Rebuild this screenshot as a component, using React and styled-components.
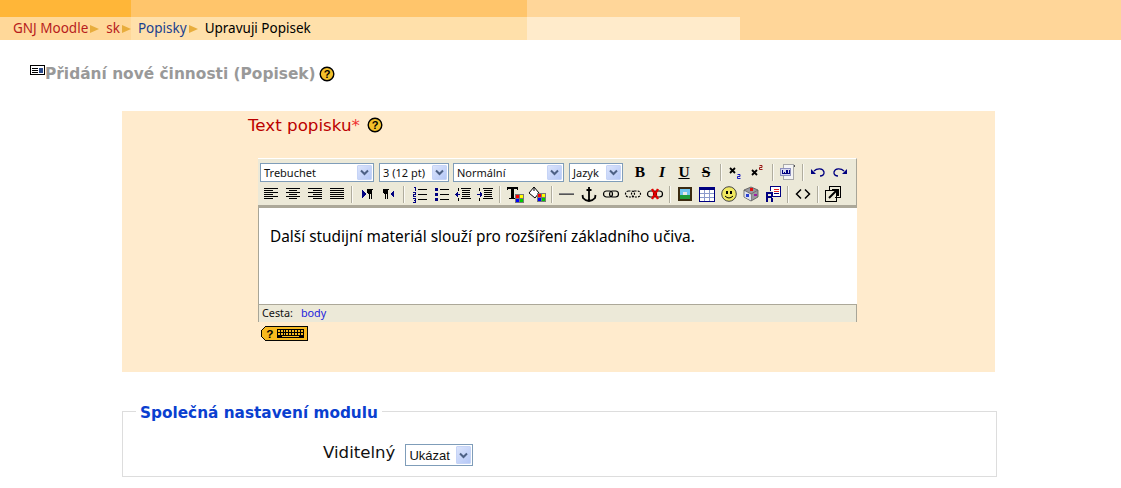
import React from "react";
import styled, { createGlobalStyle } from "styled-components";

const Global = createGlobalStyle`
  html, body { margin: 0; padding: 0; background: #fff; overflow: hidden; }
  body { font-family: "DejaVu Sans", Verdana, sans-serif; color: #000; }
`;

/* ---------- header ---------- */
const Header = styled.header`
  display: grid;
  grid-template-columns: 131px 396px 213px 1fr;
  grid-template-rows: 17px 23px;
  height: 40px;
  background: #ffd699;
`;
const Tab = styled.div`
  background: ${(p) => p.$c};
  display: flex;
  align-items: center;
  min-width: 0;
`;
const Crumbs = styled.nav`
  grid-column: 1 / 3;
  grid-row: 2;
  display: flex;
  align-items: center;
  padding-left: 13px;
  font: 13.5px/1 "Noto Sans", "DejaVu Sans", sans-serif;
  background: linear-gradient(to right, #ffd899 0, #ffd899 131px, #ffe0aa 131px);
`;
const Crumb = styled.a`
  color: ${(p) => p.$c};
  white-space: nowrap;
`;
const Sep = styled.span`
  display: inline-block;
  width: 0;
  height: 0;
  border-left: 9px solid #e8ad3c;
  border-top: 4.5px solid transparent;
  border-bottom: 4.5px solid transparent;
  margin: 0 7px 0 2px;
`;

/* ---------- heading ---------- */
const Heading = styled.h2`
  display: flex;
  align-items: center;
  height: 20px;
  margin: 24px 0 0 30px;
  font: bold 15.4px/20px "DejaVu Sans", Verdana, sans-serif;
  color: #999;
  white-space: nowrap;
`;
const HeadingIcon = styled.svg`
  width: 15px;
  height: 10px;
  margin-bottom: 8px;
  flex: none;
`;
const HelpIcon = styled.svg`
  width: 16px;
  height: 16px;
  flex: none;
  margin-left: ${(p) => p.$l}px;
`;

/* ---------- panel ---------- */
const Panel = styled.section`
  box-sizing: border-box;
  width: 873px;
  height: 261px;
  margin: 27px 0 0 122px;
  background: #ffebcd;
  padding: 4px 0 0 126px;
`;
const FieldLabel = styled.div`
  display: flex;
  align-items: center;
  height: 20px;
  font: 16.7px/20px "DejaVu Sans", Verdana, sans-serif;
  color: #b00;
`;
const Star = styled.span`
  color: #f03030;
`;

/* ---------- editor ---------- */
const Editor = styled.div`
  width: 599px;
  margin: 23px 0 0 10px;
`;
const Toolbar = styled.div`
  box-sizing: border-box;
  height: 50px;
  background: #ece9d8;
  padding: 2px 0 0 2px;
  border-top: 1px solid #fff;
  border-right: 1px solid #a8a597;
  border-bottom: 3px solid #aca899;
`;
const Row = styled.div`
  display: flex;
  align-items: center;
  height: 22px;
`;
const Select = styled.div`
  box-sizing: border-box;
  display: flex;
  align-items: center;
  justify-content: space-between;
  flex: none;
  width: ${(p) => p.$w}px;
  height: ${(p) => p.$h || 19}px;
  margin-right: ${(p) => p.$gap || 0}px;
  padding: 1px 1px 1px 3px;
  border: 1px solid #7f9db9;
  background: #fff;
  font: ${(p) => (p.$big ? `13px/1 "Liberation Sans", sans-serif` : `11px/1 "Noto Sans", "DejaVu Sans", sans-serif`)};
  color: #111;
`;
const SelectArrow = styled.span`
  box-sizing: border-box;
  display: flex;
  align-items: center;
  justify-content: center;
  width: 15px;
  height: 100%;
  background: linear-gradient(135deg, #dbe4fb, #b5c8f7);
  border: 1px solid #c6d4f6;
  border-radius: 1px;
`;
const Chevron = styled.svg`
  width: 9px;
  height: 7px;
`;
const Btn = styled.div`
  display: flex;
  align-items: center;
  justify-content: center;
  width: 22px;
  height: 22px;
  flex: none;
`;
const Glyph = styled.span`
  font: ${(p) => p.$style || "bold"} 15.5px/1 "Liberation Serif", serif;
  color: #000;
  padding: 0 ${(p) => (p.$deco === "line-through" ? 3 : 0)}px;
  text-decoration: ${(p) => p.$deco || "none"};
  text-decoration-thickness: 1px;
`;
const Divider = styled.span`
  box-sizing: content-box;
  flex: none;
  width: 1px;
  height: 17px;
  margin: 0 3px 0 3px;
  background: #b0ad9e;
  border-right: 1px solid #fbfaf4;
`;
const Ico = styled.svg`
  width: 20px;
  height: 20px;
  display: block;
`;
const Content = styled.div`
  box-sizing: border-box;
  height: 96px;
  background: #fff;
  border-left: 1px solid #a8a597;
  border-right: 1px solid #fff;
  padding: 19px 0 0 11px;
  font: 15.4px/20px "Noto Sans", "DejaVu Sans", sans-serif;
  color: #000;
  white-space: nowrap;
`;
const Status = styled.div`
  box-sizing: border-box;
  display: flex;
  align-items: center;
  height: 18px;
  background: #ece9d8;
  border-top: 1px solid #aca899;
  border-left: 1px solid #a8a597;
  border-right: 1px solid #a8a597;
  padding-left: 3px;
  font: 10.8px/1 "Noto Sans", "DejaVu Sans", sans-serif;
  color: #111;
`;
const PathLink = styled.a`
  color: #2222dd;
  margin-left: 8px;
`;
const KeyBadge = styled.svg`
  display: block;
  width: 47px;
  height: 15px;
  margin: 4px 0 0 3px;
`;

/* ---------- fieldset ---------- */
const Fieldset = styled.fieldset`
  box-sizing: border-box;
  width: 875px;
  height: 77px;
  margin: 28px 0 0 122px;
  padding: 0;
  border: 1px solid #ddd;
`;
const Legend = styled.legend`
  margin-left: 13px;
  padding: 4px 4px 0;
  font: bold 15.3px/18px "DejaVu Sans", Verdana, sans-serif;
  color: #0a3fd0;
`;
const FieldRow = styled.div`
  display: flex;
  align-items: center;
  margin: 22px 0 0 200px;
  font: 16.6px/20px "DejaVu Sans", Verdana, sans-serif;
  color: #111;
`;
const FieldName = styled.span`
  margin-right: 10px;
  position: relative;
  top: -2px;
`;

/* ---------- drawings ---------- */
const bars = (list, fill = "#000") =>
  list.map(([x, y, w, h = 1, f], i) => <rect key={i} x={x} y={y} width={w} height={h} fill={f || fill} />);

const Svg = ({ children }) => (
  <Ico viewBox="0 0 20 20" shapeRendering="crispEdges">{children}</Ico>
);
const Smooth = ({ children }) => <Ico viewBox="0 0 20 20">{children}</Ico>;

const lines = (spec) => spec.map(([x, w], i) => [x, 4 + i * 2, w]);
const AlignL = () => <Svg>{bars(lines([[3, 14], [3, 9], [3, 14], [3, 9], [3, 14], [3, 9]]))}</Svg>;
const AlignC = () => <Svg>{bars(lines([[3, 14], [6, 8], [3, 14], [6, 8], [3, 14], [6, 8]]))}</Svg>;
const AlignR = () => <Svg>{bars(lines([[3, 14], [8, 9], [3, 14], [8, 9], [3, 14], [8, 9]]))}</Svg>;
const AlignJ = () => <Svg>{bars(lines([[3, 14], [3, 14], [3, 14], [3, 14], [3, 14], [3, 14]]))}</Svg>;

const Pilcrow = ({ x }) => (
  <>{bars([[x, 5, 6], [x, 6, 4, 3], [x + 1, 9, 3], [x + 2, 5, 1, 10], [x + 4, 5, 1, 10]])}</>
);
const Ltr = () => (
  <Svg>
    <polygon points="5,6 9,10 5,14" fill="#000080" />
    <Pilcrow x={10} />
  </Svg>
);
const Rtl = () => (
  <Svg>
    <Pilcrow x={4} />
    <polygon points="15,6 11,10 15,14" fill="#000080" />
  </Svg>
);
const Ol = () => (
  <Svg>
    {bars([[5, 3, 2], [6, 4, 1, 3], [4, 8, 3], [6, 9, 1], [4, 10, 3], [4, 11, 1], [4, 12, 3], [4, 14, 3], [6, 15, 1], [5, 16, 2], [6, 17, 1], [4, 18, 3]], "#000080")}
    {bars([[9, 5, 9], [9, 10, 9], [9, 15, 9]])}
  </Svg>
);
const Ul = () => (
  <Svg>
    {bars([[4, 4, 3, 3], [4, 9, 3, 3], [4, 14, 3, 3]], "#000080")}
    {bars([[9, 5, 9], [9, 10, 9], [9, 15, 9]])}
  </Svg>
);
const Outdent = () => (
  <Svg>
    {bars([[2, 10, 5, 1], [4, 8, 1, 5], [3, 9, 1, 3]], "#000080")}
    {bars([[8, 4, 10], [9, 6, 8], [9, 8, 8], [9, 10, 8], [9, 12, 8], [8, 14, 10], [5, 4, 1, 3], [5, 14, 1, 3]])}
  </Svg>
);
const Indent = () => (
  <Svg>
    {bars([[2, 10, 5, 1], [5, 8, 1, 5], [6, 9, 1, 3]], "#000080")}
    {bars([[8, 4, 10], [9, 6, 8], [9, 8, 8], [9, 10, 8], [9, 12, 8], [8, 14, 10], [4, 4, 1, 3], [4, 14, 1, 3]])}
  </Svg>
);
const Grid = ({ x, y }) => (
  <>
    {bars([[x, y, 9, 9, "#777"]])}
    {bars([
      [x + 1, y + 1, 3, 3, "#f00"], [x + 5, y + 1, 3, 3, "#ff0"],
      [x + 1, y + 5, 3, 3, "#00f"], [x + 5, y + 5, 3, 3, "#0c0"],
    ])}
  </>
);
const TextColor = () => (
  <Svg>
    {bars([[2, 3, 11, 2], [2, 5, 1, 1], [12, 5, 1, 1], [6, 5, 3, 9], [4, 14, 6, 1]])}
    <Grid x={10} y={10} />
  </Svg>
);
const BgColor = () => (
  <Smooth>
    <path d="M2 9 L7 3 L12 9 L8 14 Z" fill="#fff" stroke="#000" strokeWidth="1" />
    <path d="M7 3 L7 7" stroke="#000" />
    <g shapeRendering="crispEdges"><Grid x={10} y={9} /></g>
  </Smooth>
);
const Hr = () => <Svg>{bars([[2, 10, 15, 1, "#555"], [2, 9, 15, 1, "#888"]])}</Svg>;
const Anchor = () => (
  <Smooth>
    <path d="M10 3 V17 M7.5 6 H12.5 M3.5 11 L4 14 Q6 16.5 10 17 Q14 16.5 16 14 L16.5 11" fill="none" stroke="#000" strokeWidth="1.8" />
  </Smooth>
);
const Chain = ({ dash }) => (
  <g fill="none" stroke="#000" strokeWidth="1.2" strokeDasharray={dash ? "2 1.2" : undefined}>
    <rect x="2.5" y="7" width="9" height="6" rx="3" />
    <rect x="8.5" y="7" width="9" height="6" rx="3" />
  </g>
);
const Link = () => <Smooth><Chain /></Smooth>;
const Unlink = () => <Smooth><Chain dash /></Smooth>;
const DelLink = () => (
  <Smooth>
    <Chain />
    <path d="M7 5 L13 15 M13 5 L7 15" stroke="#e00000" strokeWidth="2.4" />
  </Smooth>
);
const Picture = () => (
  <Svg>
    {bars([[3, 3, 14, 14, "#3b2a10"], [5, 5, 10, 10, "#6fc4f0"], [5, 11, 10, 4, "#1e9c3a"], [8, 8, 4, 3, "#e8e8e8"]])}
  </Svg>
);
const Table = () => (
  <Svg>
    {bars([[2, 3, 16, 15, "#000080"], [3, 6, 14, 11, "#fff"]])}
    {bars([[7, 6, 1, 11, "#8a9acb"], [12, 6, 1, 11, "#8a9acb"], [3, 9, 14, 1, "#8a9acb"], [3, 13, 14, 1, "#8a9acb"]])}
  </Svg>
);
const Smile = () => (
  <Smooth>
    <circle cx="10" cy="10" r="7.3" fill="#f0e860" stroke="#444" />
    <rect x="7" y="7" width="2" height="3" fill="#000" />
    <rect x="11" y="7" width="2" height="3" fill="#000" />
    <path d="M6 12 Q10 16 14 12" fill="none" stroke="#000" />
  </Smooth>
);
const Dice = () => (
  <Smooth>
    <path d="M10 3 L17 6 V13 L10 17 L3 13 V6 Z" fill="#9a9aa0" stroke="#555" strokeWidth=".8" />
    <path d="M3 6 L10 10 L17 6 M10 10 V17" fill="none" stroke="#666" strokeWidth=".8" />
    <path d="M3.5 7 L10 10.5 V16.5 L3.5 13 Z" fill="#dfe2f2" />
    <rect x="9" y="4" width="3" height="3" fill="#e01010" />
    <rect x="5" y="10" width="3" height="3" fill="#2a40d0" />
    <rect x="13" y="10" width="3" height="2" fill="#a020a0" />
  </Smooth>
);
const Special = () => (
  <Svg>
    {bars([[7, 2, 11, 11, "#000080"], [8, 3, 9, 9, "#fff"], [11, 5, 5, 1, "#e02020"], [11, 7, 5, 1, "#e02020"], [11, 9, 5, 1, "#000080"]])}
    {bars([[2, 7, 8, 11, "#ece9d8"], [3, 8, 6, 2, "#000080"], [3, 8, 2, 10, "#000080"], [8, 8, 2, 5, "#000080"], [3, 12, 6, 2, "#000080"], [8, 14, 2, 4, "#000080"]])}
  </Svg>
);
const Code = () => (
  <Smooth>
    <path d="M8 5.5 L3.5 10 L8 14.5 M12 5.5 L16.5 10 L12 14.5" fill="none" stroke="#000" strokeWidth="1.5" />
  </Smooth>
);
const Fullscreen = () => (
  <Svg>
    {bars([[6, 2, 12, 1], [17, 2, 1, 12], [6, 2, 1, 4], [12, 13, 6, 1], [2, 6, 12, 1], [2, 6, 1, 12], [2, 17, 12, 1], [13, 6, 1, 12]])}
    <path d="M6 14 L13 7" stroke="#000" strokeWidth="2" shapeRendering="auto" />
    {bars([[9, 5, 7, 2], [14, 5, 2, 7]])}
  </Svg>
);
const ScriptIcon = ({ sub }) => (
  <Smooth>
    <path d={sub ? "M4 6 L9 11 M9 6 L4 11" : "M4 8 L9 13 M9 8 L4 13"} stroke="#000" strokeWidth="1.8" />
    {sub ? (
      <path d="M11.5 12.5 H14 V14.5 H11.5 V16.5 H14.5" fill="none" stroke="#0000c0" strokeWidth=".9" />
    ) : (
      <path d="M11.5 3.5 H14 V5.5 H11.5 V7.5 H14.5" fill="none" stroke="#900000" strokeWidth=".9" />
    )}
  </Smooth>
);
const Word = () => (
  <Svg>
    {bars([[5, 2, 11, 16, "#a8a8a8"], [6, 3, 9, 14, "#f4f4f4"], [2, 6, 11, 8, "#8d90bf"], [3, 7, 9, 6, "#d6d7ee"]])}
    {bars([[4, 8, 1, 4], [6, 10, 1, 2], [8, 8, 1, 4], [5, 11, 1, 1], [7, 11, 1, 1], [9, 8, 1, 4], [11, 8, 1, 4], [10, 11, 1, 1]], "#000080")}
    {bars([[16, 3, 1, 2, "#555"]])}
  </Svg>
);
const Undo = () => (
  <Smooth>
    <path d="M6 9 C9 6 15 6 16 10 C16.5 13 14 14 12 14" fill="none" stroke="#000080" strokeWidth="1.3" />
    <polygon points="3,12 3,7 8,12" fill="#000080" />
  </Smooth>
);
const Redo = () => (
  <Smooth>
    <path d="M14 9 C11 6 5 6 4 10 C3.5 13 6 14 8 14" fill="none" stroke="#000080" strokeWidth="1.3" />
    <polygon points="17,12 17,7 12,12" fill="#000080" />
  </Smooth>
);

const Help = ({ left }) => (
  <HelpIcon $l={left} viewBox="0 0 16 16">
    <circle cx="8" cy="8" r="6.8" fill="#f4c02a" stroke="#000" strokeWidth="1.4" />
    <text x="8" y="12" textAnchor="middle" fontFamily="Liberation Sans, sans-serif" fontWeight="bold" fontSize="11" fill="#000">?</text>
  </HelpIcon>
);
const ArrowDown = () => (
  <SelectArrow>
    <Chevron viewBox="0 0 9 7">
      <path d="M1 1.5 L4.5 5 L8 1.5" fill="none" stroke="#4d6185" strokeWidth="2" />
    </Chevron>
  </SelectArrow>
);
const Drop = ({ w, gap, h, big, children }) => (
  <Select $w={w} $gap={gap} $h={h} $big={big}>
    <span>{children}</span>
    <ArrowDown />
  </Select>
);
const B = ({ children }) => <Btn>{children}</Btn>;

const row2 = [
  AlignL, AlignC, AlignR, AlignJ, null, Ltr, Rtl, null, Ol, Ul, Outdent, Indent, null,
  TextColor, BgColor, null, Hr, Anchor, Link, Unlink, DelLink, null,
  Picture, Table, Smile, Dice, Special, null, Code, null, Fullscreen,
];

export default function App() {
  return (
    <>
      <Global />
      <Header>
        <Tab $c="#ffb638" />
        <Tab $c="#ffc56b" />
        <Tab $c="#ffd699" />
        <Tab $c="#ffd699" />
        <Crumbs>
          <Crumb $c="#b71c1c">GNJ Moodle</Crumb>
          <Sep />
          <Crumb $c="#b71c1c">sk</Crumb>
          <Sep />
          <Crumb $c="#1a3f8f">Popisky</Crumb>
          <Sep />
          <Crumb $c="#000">Upravuji Popisek</Crumb>
        </Crumbs>
        <Tab $c="#ffebcb" />
      </Header>

      <Heading>
        <HeadingIcon viewBox="0 0 15 10" shapeRendering="crispEdges">
          <rect x="0.5" y="0.5" width="14" height="9" fill="#fff" stroke="#000" />
          <rect x="2" y="3" width="6" height="1" fill="#000" />
          <rect x="2" y="5" width="6" height="1" fill="#000" />
          <rect x="2" y="7" width="6" height="1" fill="#000" />
          <rect x="9" y="3" width="4" height="5" fill="#2a4a8a" />
        </HeadingIcon>
        Přidání nové činnosti (Popisek)
        <Help left={3} />
      </Heading>

      <Panel>
        <FieldLabel>
          Text popisku<Star>*</Star>
          <Help left={7} />
        </FieldLabel>
        <Editor>
          <Toolbar>
            <Row>
              <Drop w={114} gap={5}>Trebuchet</Drop>
              <Drop w={70} gap={4}>3 (12 pt)</Drop>
              <Drop w={111} gap={5}>Normální</Drop>
              <Drop w={54} gap={6}>Jazyk</Drop>
              <B><Glyph>B</Glyph></B>
              <B><Glyph $style="italic bold">I</Glyph></B>
              <B><Glyph $deco="underline">U</Glyph></B>
              <B><Glyph $deco="line-through">S</Glyph></B>
              <Divider />
              <B><ScriptIcon sub /></B>
              <B><ScriptIcon /></B>
              <Divider />
              <B><Word /></B>
              <Divider />
              <B><Undo /></B>
              <B><Redo /></B>
            </Row>
            <Row>
              {row2.map((Icon, i) =>
                Icon ? <B key={i}><Icon /></B> : <Divider key={i} />
              )}
            </Row>
          </Toolbar>
          <Content>Další studijní materiál slouží pro rozšíření základního učiva.</Content>
          <Status>
            Cesta:
            <PathLink>body</PathLink>
          </Status>
          <KeyBadge viewBox="0 0 48 15" shapeRendering="crispEdges">
            <path d="M4 .5 H47.5 V14.5 H4 L.5 11 V4 Z" fill="#f7b91e" stroke="#000" />
            <text x="9" y="12" textAnchor="middle" fontFamily="Liberation Sans, sans-serif" fontWeight="bold" fontSize="12" fill="#000">?</text>
            <rect x="16" y="3" width="28" height="9" fill="#000" />
            {[0, 1].map((r) =>
              [0, 1, 2, 3, 4, 5, 6, 7, 8].map((c) => (
                <rect key={`${r}-${c}`} x={17 + c * 3} y={4 + r * 3} width="2" height="2" fill="#f7b91e" />
              ))
            )}
            <rect x="21" y="10" width="18" height="1" fill="#f7b91e" />
          </KeyBadge>
        </Editor>
      </Panel>

      <Fieldset>
        <Legend>Společná nastavení modulu</Legend>
        <FieldRow>
          <FieldName>Viditelný</FieldName>
          <Drop w={68} h={22} big>Ukázat</Drop>
        </FieldRow>
      </Fieldset>
    </>
  );
}
